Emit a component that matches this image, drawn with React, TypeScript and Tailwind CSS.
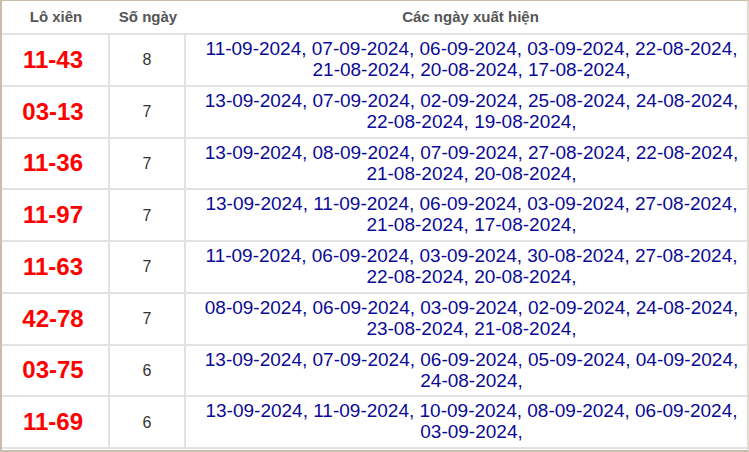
import React from "react";

const rows: [string, number, string, string][] = [
  ["11-43", 8, "11-09-2024, 07-09-2024, 06-09-2024, 03-09-2024, 22-08-2024,", "21-08-2024, 20-08-2024, 17-08-2024,"],
  ["03-13", 7, "13-09-2024, 07-09-2024, 02-09-2024, 25-08-2024, 24-08-2024,", "22-08-2024, 19-08-2024,"],
  ["11-36", 7, "13-09-2024, 08-09-2024, 07-09-2024, 27-08-2024, 22-08-2024,", "21-08-2024, 20-08-2024,"],
  ["11-97", 7, "13-09-2024, 11-09-2024, 06-09-2024, 03-09-2024, 27-08-2024,", "21-08-2024, 17-08-2024,"],
  ["11-63", 7, "11-09-2024, 06-09-2024, 03-09-2024, 30-08-2024, 27-08-2024,", "22-08-2024, 20-08-2024,"],
  ["42-78", 7, "08-09-2024, 06-09-2024, 03-09-2024, 02-09-2024, 24-08-2024,", "23-08-2024, 21-08-2024,"],
  ["03-75", 6, "13-09-2024, 07-09-2024, 06-09-2024, 05-09-2024, 04-09-2024,", "24-08-2024,"],
  ["11-69", 6, "13-09-2024, 11-09-2024, 10-09-2024, 08-09-2024, 06-09-2024,", "03-09-2024,"],
];

export default function App() {
  return (
    <div
      className="w-[749px] h-[452px] bg-white border-l-2 border-t border-r-2 border-b-2 border-l-[#c8bdab] border-t-[#c8bdab] border-r-[#e0dbd0] border-b-[#c8bdab] overflow-hidden"
      style={{ fontFamily: '"Liberation Sans", Arial, sans-serif' }}
    >
      <div className="grid grid-cols-[108px_76px_1fr] h-[34px] border-b-2 border-[#e2e2e2] text-[15px] font-bold text-[#555555]">
        <div className="flex items-center justify-center pt-[1px]">Lô xiên</div>
        <div className="flex items-center justify-center pt-[1px]">Số ngày</div>
        <div className="flex items-center justify-center pt-[1px] pl-[8px]">Các ngày xuất hiện</div>
      </div>
      {rows.map(([pair, n, l1, l2], i) => (
        <div
          key={i}
          className="grid grid-cols-[108px_76px_1fr] h-[51.75px] border-b-2 border-[#e2e2e2]"
        >
          <div className="flex items-center justify-center pr-[4px] text-[24px] font-bold text-[#ff0000] border-r-2 border-[#e2e2e2]">
            {pair}
          </div>
          <div className="flex items-center justify-center pt-[1px] text-[16px] text-[#333333] border-r-2 border-[#e2e2e2]">
            {n}
          </div>
          <div className="pt-[3px] pl-[10px] text-center text-[19px] leading-[21px] text-[#0a0a96] whitespace-nowrap">
            <div>{l1}</div>
            <div>{l2}</div>
          </div>
        </div>
      ))}
    </div>
  );
}
